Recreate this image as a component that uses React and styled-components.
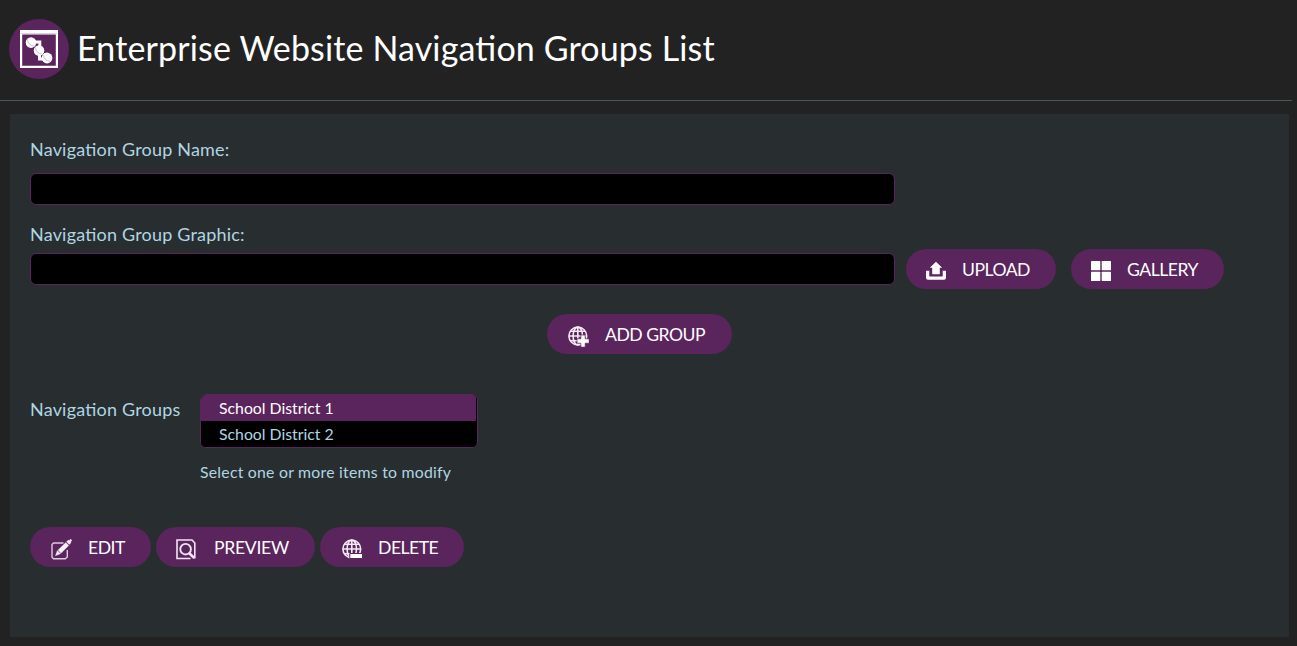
import React from 'react';
import styled, { createGlobalStyle } from 'styled-components';

const GlobalStyle = createGlobalStyle`
  * { box-sizing: border-box; }
  body {
    margin: 0;
    background: #222;
    color: #afd6e2;
    font-family: Lato, "Open Sans", sans-serif;
    font-size: 18px;
    font-feature-settings: "liga" 1;
  }
`;

const Page = styled.div`
  height: 646px;
  overflow: hidden;
`;

const Header = styled.header`
  display: flex;
  align-items: center;
  width: 1292px;
  height: 101px;
  padding: 0 0 3px 9px;
  border-bottom: 1px solid #455860;
`;

const Badge = styled.div`
  display: flex;
  width: 60px;
  height: 60px;
  border-radius: 50%;
  background: #5a245c;
`;

const Title = styled.h1`
  margin: -2px 0 0 8px;
  color: #fff;
  font-size: 34px;
  font-weight: 400;
  line-height: 44px;
  letter-spacing: 0.14px;
  white-space: nowrap;
`;

const Panel = styled.main`
  width: 1279px;
  height: 523px;
  margin: 13px 0 0 10px;
  padding: 23px 20px 0;
  background: #282d2f;
`;

const Label = styled.label`
  display: block;
  height: 26px;
  line-height: 24px;
  white-space: nowrap;
  letter-spacing: 0.2px;
`;

const Field = styled.div`
  margin-bottom: ${(p) => p.$after || '0'};
`;

const Input = styled.input`
  display: block;
  width: 865px;
  height: 32px;
  margin-top: ${(p) => p.$before || '0'};
  padding: 0 8px;
  border: 1px solid #5a245c;
  border-radius: 6px;
  background: #000;
  color: #afd6e2;
  font: inherit;
`;

const GraphicRow = styled.div`
  display: flex;
  align-items: center;
  height: 40px;
  margin-top: 1px;
`;

const Button = styled.button`
  display: flex;
  align-items: center;
  flex: none;
  width: ${(p) => p.$width};
  height: 40px;
  margin: 0 0 0 ${(p) => p.$before || '0'};
  padding: 0 0 0 ${(p) => p.$inset || '20px'};
  border: 0;
  border-radius: 20px;
  background: #5a245c;
  color: #fff;
  font: inherit;
  font-size: 17.6px;
  line-height: 40px;
  letter-spacing: ${(p) => p.$tracking || '-0.5px'};
  white-space: nowrap;
  svg { flex: none; margin: 4px ${(p) => p.$gap || '16px'} 0 0; }
`;

const Caption = styled.span`
  padding-top: 2px;
  line-height: 38px;
`;

const AddRow = styled.div`
  display: flex;
  margin: 25px 0 0 517px;
`;

const GroupsRow = styled.div`
  display: flex;
  margin-top: 40px;
`;

const GroupsLabel = styled(Label)`
  width: 170px;
  margin-top: 3px;
`;

const ListBox = styled.div`
  width: 278px;
  height: 54px;
  padding-right: 1px;
  border: 1px solid #5a245c;
  border-radius: 6px;
  background: #000;
  overflow: hidden;
`;

const Option = styled.div`
  height: 26px;
  padding-left: 18px;
  font-size: 15.8px;
  line-height: 25px;
  background: ${(p) => (p.$selected ? '#5a245c' : '#000')};
  color: ${(p) => (p.$selected ? '#fff' : '#afd6e2')};
`;

const Hint = styled.p`
  margin: 12px 0 1px;
  font-size: 15.8px;
  line-height: 24px;
  letter-spacing: 0.24px;
`;

const Actions = styled.div`
  display: flex;
  gap: 5px;
  margin-top: 42px;
`;

const NavIcon = () => (
  <svg width="60" height="60" viewBox="0 0 60 60">
    <path d="M11 11h38v38H11z M13.200 15.500v31.300h33.600V15.500z" fill="#fff" fillRule="evenodd" />
    <path d="M12 14.500h36" stroke="#c9b5ca" strokeWidth=".6" />
    <path d="M26 23h4.800v6M36.500 34v6h-6v-5" fill="none" stroke="#fff" strokeWidth="3" />
    <g fill="#fff">
      <circle cx="22" cy="23.600" r="5.300" />
      <circle cx="30" cy="31.500" r="5.300" />
      <circle cx="38" cy="39" r="5.400" />
    </g>
    <path d="M18.500 20.500q.5 5.500 6.500 6.500M26.500 28.500q.5 5.500 6.500 6.500M34.500 36q.5 5.500 6.500 6.500" fill="none" stroke="#b79bb9" strokeWidth=".6" />
  </svg>
);

const UploadIcon = () => (
  <svg width="20" height="20" viewBox="0 0 20 20" fill="#fff">
    <path d="M10 .8l6.200 6h-2.400v6.500H6.200V6.800H3.800z" />
    <path d="M0 9.800h3.300v5.700h13.400V9.800H20v7q0 2-2 2H2q-2 0-2-2z" />
  </svg>
);

const GalleryIcon = () => (
  <svg width="20" height="20" viewBox="0 0 20 20" fill="#fff">
    <rect width="9.300" height="9.300" rx=".6" />
    <rect x="10.700" width="9.300" height="9.300" rx=".6" />
    <rect y="10.700" width="9.300" height="9.300" rx=".6" />
    <rect x="10.700" y="10.700" width="9.300" height="9.300" rx=".6" />
  </svg>
);

const GlobeIcon = ({ minus }) => (
  <svg width="21" height="21" viewBox="0 0 21 21">
    <g fill="none" stroke="#f3eaf3" strokeWidth="1.600">
      <circle cx="9.800" cy="10" r="8.900" />
      <ellipse cx="9.800" cy="10" rx="4.700" ry="8.900" />
      <path d="M9.800 1v18M1 10h17.600M2.500 5.300h14.600M2.500 14.700h14.600" />
    </g>
    {minus ? (
      <path d="M7.800 14.500H20.500V19.500H7.800z" fill="#fff" stroke="#5a245c" />
    ) : (
      <path d="M12.800 9h4.400v3.800h4v4.400h-4v4h-4.400v-4H9v-4.400h3.800z" fill="#fff" stroke="#5a245c" strokeWidth=".7" />
    )}
  </svg>
);

const EditIcon = () => (
  <svg width="21" height="21" viewBox="0 0 21 21">
    <path d="M12.500 4H2.500L1 5.500v12.700l1.500 1.500h11.800l2-1.800V11" fill="none" stroke="#dccbdd" strokeWidth="1.400" />
    <path d="M7 11l7.800-7.500 3 3L10 14.300z M15.500 2.800L17.300 1l.8.7L19.500 0 21 1.400l-1.500 1.700.5.700-1.700 1.800z M6.300 11.500l3.300 3.300-5.200 2z" fill="#f6eff6" stroke="#f6eff6" strokeWidth=".3" />
  </svg>
);

const PreviewIcon = () => (
  <svg width="20" height="21" viewBox="0 0 20 21" fill="none" stroke="#f0e6f1">
    <path d="M14.500 19.500H1V1h15l2.800 3v15.500" strokeWidth="1.600" />
    <circle cx="9.600" cy="10.200" r="5.300" strokeWidth="1.900" />
    <path d="M13 14l5.300 5" strokeWidth="2.600" />
  </svg>
);

export default function App() {
  return (
    <Page>
      <GlobalStyle />
      <Header>
        <Badge><NavIcon /></Badge>
        <Title>Enterprise Website Navigation Groups List</Title>
      </Header>
      <Panel>
        <Field $after="17px">
          <Label htmlFor="name">Navigation Group Name:</Label>
          <Input id="name" $before="10px" />
        </Field>
        <Field>
          <Label htmlFor="graphic">Navigation Group Graphic:</Label>
          <GraphicRow>
            <Input id="graphic" />
            <Button $width="150px" $before="11px"><UploadIcon /><Caption>UPLOAD</Caption></Button>
            <Button $width="153px" $before="15px"><GalleryIcon /><Caption>GALLERY</Caption></Button>
          </GraphicRow>
        </Field>
        <AddRow>
          <Button $width="185px" $inset="21px"><GlobeIcon /><Caption>ADD GROUP</Caption></Button>
        </AddRow>
        <GroupsRow>
          <GroupsLabel>Navigation Groups</GroupsLabel>
          <div>
            <ListBox>
              <Option $selected>School District 1</Option>
              <Option>School District 2</Option>
            </ListBox>
            <Hint>Select one or more items to modify</Hint>
          </div>
        </GroupsRow>
        <Actions>
          <Button $width="121px" $inset="21px"><EditIcon /><Caption>EDIT</Caption></Button>
          <Button $width="159px" $gap="18px" $tracking="-0.3px"><PreviewIcon /><Caption>PREVIEW</Caption></Button>
          <Button $width="144px" $inset="22px" $gap="15px"><GlobeIcon minus /><Caption>DELETE</Caption></Button>
        </Actions>
      </Panel>
    </Page>
  );
}
